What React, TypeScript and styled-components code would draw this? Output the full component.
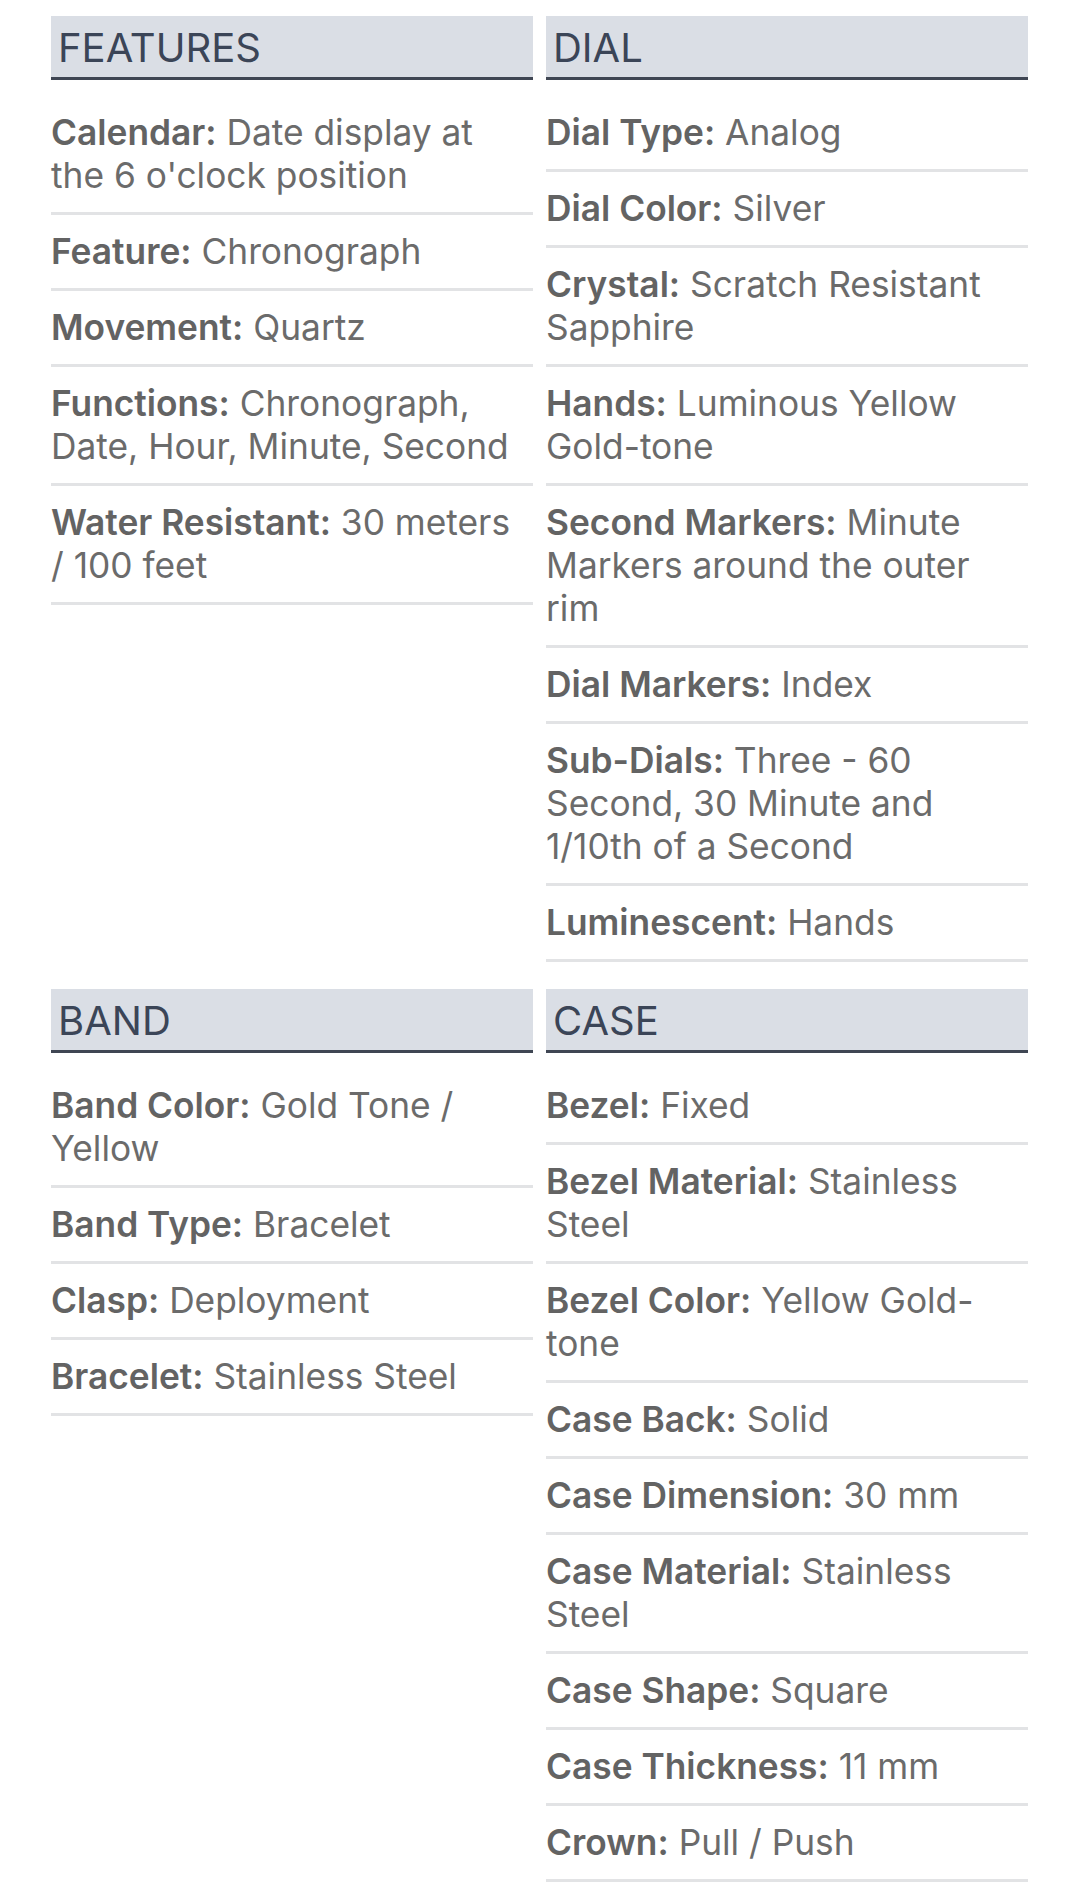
import React from 'react';
import styled, { createGlobalStyle } from 'styled-components';

const GlobalStyle = createGlobalStyle`
  html, body {
    margin: 0;
    padding: 0;
    background: #fff;
  }
  body {
    font-family: Inter, "Open Sans", "Liberation Sans", Arial, sans-serif;
  }
`;

type Spec = { label: string; value: string };
type Section = { title: string; specs: Spec[] };

const features: Section = {
  title: 'FEATURES',
  specs: [
    { label: 'Calendar:', value: "Date display at the 6 o'clock position" },
    { label: 'Feature:', value: 'Chronograph' },
    { label: 'Movement:', value: 'Quartz' },
    { label: 'Functions:', value: 'Chronograph, Date, Hour, Minute, Second' },
    { label: 'Water Resistant:', value: '30 meters /\u00a0100 feet' },
  ],
};

const dial: Section = {
  title: 'DIAL',
  specs: [
    { label: 'Dial Type:', value: 'Analog' },
    { label: 'Dial Color:', value: 'Silver' },
    { label: 'Crystal:', value: 'Scratch Resistant Sapphire' },
    { label: 'Hands:', value: 'Luminous Yellow Gold-tone' },
    { label: 'Second Markers:', value: 'Minute Markers around the outer rim' },
    { label: 'Dial Markers:', value: 'Index' },
    { label: 'Sub-Dials:', value: 'Three - 60 Second, 30 Minute and 1/10th of a Second' },
    { label: 'Luminescent:', value: 'Hands' },
  ],
};

const band: Section = {
  title: 'BAND',
  specs: [
    { label: 'Band Color:', value: 'Gold Tone / Yellow' },
    { label: 'Band Type:', value: 'Bracelet' },
    { label: 'Clasp:', value: 'Deployment' },
    { label: 'Bracelet:', value: 'Stainless Steel' },
  ],
};

const caseSection: Section = {
  title: 'CASE',
  specs: [
    { label: 'Bezel:', value: 'Fixed' },
    { label: 'Bezel Material:', value: 'Stainless Steel' },
    { label: 'Bezel Color:', value: 'Yellow Gold-tone' },
    { label: 'Case Back:', value: 'Solid' },
    { label: 'Case Dimension:', value: '30 mm' },
    { label: 'Case Material:', value: 'Stainless Steel' },
    { label: 'Case Shape:', value: 'Square' },
    { label: 'Case Thickness:', value: '11 mm' },
    { label: 'Crown:', value: 'Pull / Push' },
  ],
};

const Page = styled.div`
  padding: 16px 52px 0 51px;
  display: grid;
  grid-template-columns: 1fr 1fr;
  column-gap: 13px;
  row-gap: 27px;
  align-items: start;
`;

const Block = styled.section`
  display: flex;
  flex-direction: column;
`;

const Heading = styled.h2`
  margin: 0 0 16px;
  padding: 0 7px;
  height: 61px;
  line-height: 64px;
  background: #dadee5;
  border-bottom: 3px solid #3f4653;
  color: #3b4557;
  font-size: 40px;
  font-weight: 400;
  overflow: hidden;
`;

const List = styled.ul`
  list-style: none;
  margin: 0;
  padding: 0;
`;

const Row = styled.li`
  padding: 15px 0;
  border-bottom: 3px solid #e2e3e5;
  font-size: 35.3px;
  line-height: 43px;
  color: #6b6b6b;
`;

const Label = styled.strong`
  font-weight: 600;
  color: #636363;
`;

function SpecBlock({ section }: { section: Section }) {
  return (
    <Block>
      <Heading>{section.title}</Heading>
      <List>
        {section.specs.map((s) => (
          <Row key={s.label}>
            <Label>{s.label}</Label> {s.value}
          </Row>
        ))}
      </List>
    </Block>
  );
}

export default function App() {
  return (
    <>
      <GlobalStyle />
      <Page>
        <SpecBlock section={features} />
        <SpecBlock section={dial} />
        <SpecBlock section={band} />
        <SpecBlock section={caseSection} />
      </Page>
    </>
  );
}
